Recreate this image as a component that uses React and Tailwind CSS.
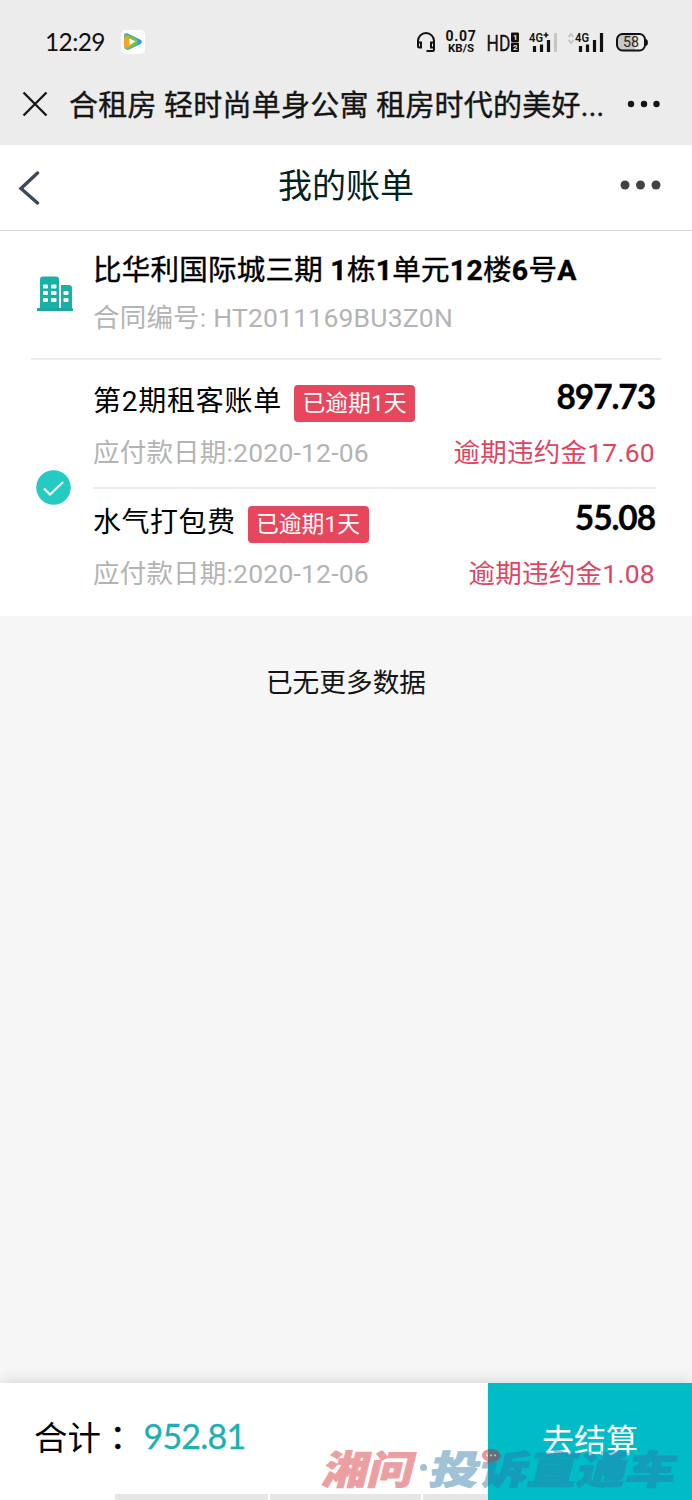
import React from 'react';

const lato = "font-['Lato','Noto_Sans_CJK_SC',sans-serif]";
const svgFont = { fontFamily: "'Roboto', sans-serif" };

function Headphones() {
  return (
    <svg className="block h-[22px] w-5 shrink-0" viewBox="0 0 20 22" fill="none" stroke="#111" strokeWidth="2">
      <path d="M2 13V10a8 8 0 0 1 16 0v3" />
      <path d="M2 11.500h3v5H3.500A1.500 1.500 0 0 1 2 15z" />
      <path d="M18 11.500h-3v5h3zM18 15v3.500a1.500 1.500 0 0 1-1.500 1.500H10.500" />
    </svg>
  );
}

function StatusIcons() {
  return (
    <div className="flex h-[26px] items-center text-[#111]">
      <Headphones />
      <div className="ml-2 flex w-[34px] flex-col items-center font-['Roboto',sans-serif] font-bold">
        <span className="text-[14px] leading-[13px] tracking-[0.7px]">0.07</span>
        <span className="text-[11.500px] leading-[11px]">KB/S</span>
      </div>
      <svg className="ml-2 block h-[26px] w-[34px]" viewBox="0 0 34 26" style={svgFont}>
        <text transform="translate(0.5 21.5) scale(0.79 1)" fontSize="22" fill="#111" stroke="#111" strokeWidth="0.300">HD</text>
        <rect x="25" y="3.500" width="8" height="9.500" rx="1" fill="#111" />
        <rect x="25" y="13.500" width="8" height="9.500" rx="1" fill="#111" />
        <text x="27" y="11" fontSize="8" fontWeight="700" fill="#ececec">1</text>
        <text x="27" y="21.300" fontSize="8" fontWeight="700" fill="#ececec">2</text>
      </svg>
      <svg className="ml-2 block h-[26px] w-[32px]" viewBox="0 0 32 26" style={svgFont}>
        <text x="1" y="13" fontSize="13.500" fontWeight="600" textLength="14" lengthAdjust="spacingAndGlyphs" fill="#111">4G</text>
        <path d="M15.500 6h5M18 3.500v5" stroke="#111" strokeWidth="1.600" />
        <path d="M6.500 17v6M13.500 15.500V23M20.500 11V23" stroke="#111" strokeWidth="3.200" />
        <path d="M27.500 4v19" stroke="#c6c6c6" strokeWidth="3" />
      </svg>
      <svg className="ml-[7px] block h-[26px] w-[38px]" viewBox="0 0 38 26" style={svgFont}>
        <path d="M1.500 8l2.500-3 2.500 3M1.500 11l2.500 3 2.500-3" stroke="#c2c2c2" strokeWidth="1.800" fill="none" />
        <text x="8" y="13" fontSize="13.500" fontWeight="600" textLength="14" lengthAdjust="spacingAndGlyphs" fill="#111">4G</text>
        <path d="M13.500 17v6M20.500 15.500V23M27.500 11V23M34.500 4v19" stroke="#111" strokeWidth="3.200" />
      </svg>
      <svg className="ml-[10px] block h-[26px] w-[34px]" viewBox="0 0 34 26" style={svgFont}>
        <path d="M7.500 5H20v17H7.500A5.500 5.500 0 0 1 2 16.500v-6A5.500 5.500 0 0 1 7.500 5z" fill="#c8c8c8" />
        <rect x="2" y="5" width="28" height="16.500" rx="5.500" fill="none" stroke="#111" strokeWidth="2" />
        <path d="M31 10.500c2 .5 2 5.500 0 6z" fill="#111" stroke="#111" />
        <text x="8" y="18.200" fontSize="14.500" textLength="16" lengthAdjust="spacingAndGlyphs" fill="#222">58</text>
      </svg>
    </div>
  );
}

function VideoIcon() {
  return (
    <svg className="block h-[24px] w-[24px]" viewBox="0 0 24 24">
      <rect width="24" height="24" rx="5" fill="#fff" />
      <path d="M3 5.500Q3 2.500 6.500 3.500L19 9.500Q22.500 11.500 19.500 14L8 19.500Q4 20.500 3.500 17Z" fill="#3298dc" />
      <path d="M3 7Q3 3.500 6.500 4.500L15 8.500Q19 11.500 15.500 14.500L7 19.500Q3.500 19.500 3 15Z" fill="#7dc142" />
      <path d="M3 8Q4 5.500 7 7L14 11.500 6 18Q3 17.500 3 14Z" fill="#f3a72b" />
      <path d="M8.500 8.500 14.500 11.500 8.500 15Z" fill="#fff" />
    </svg>
  );
}

function Building() {
  return (
    <svg className="block h-9 w-9" viewBox="0 0 36 36">
      <path d="M3 33V3.500A3 3 0 0 1 6 .500h13a3 3 0 0 1 3 3V33zM24 33V9h8a3 3 0 0 1 3 3v21z" fill="#19b0a5" />
      <path d="M1 32h34q1 0 1 1v2H0v-2q0-1 1-1z" fill="#19a89e" />
      <g fill="#fff">
        <rect x="6" y="8.500" width="5" height="4" rx="1" />
        <rect x="14" y="8.500" width="5.500" height="4" rx="1" />
        <rect x="6" y="15" width="5" height="4" rx="1" />
        <rect x="14" y="15" width="5.500" height="4" rx="1" />
        <rect x="6" y="22" width="5" height="4" rx="1" />
        <rect x="14" y="22" width="5.500" height="4" rx="1" />
        <rect x="26.500" y="15" width="5" height="4" rx="1" />
        <rect x="26.500" y="22" width="5" height="4" rx="1" />
      </g>
    </svg>
  );
}

function Bill({ name, nameSpacing, amount, penalty }) {
  return (
    <div className="flex justify-between pr-px">
      <div>
        <div className="flex h-[42px] items-start">
          <span className={`${nameSpacing} pt-[2px] text-[28px] leading-[36px] text-black font-['Roboto','Noto_Sans_CJK_SC',sans-serif]`}>{name}</span>
          <span className="ml-3 mt-[3px] h-[37px] w-[121px] rounded-[4px] bg-[#e8465c] text-center text-[22.800px] leading-[38px] text-white font-['Roboto','Noto_Sans_CJK_SC',sans-serif]">
            已逾期1天
          </span>
        </div>
        <div className="mt-[11px] text-[26.500px] leading-9 tracking-[0.200px] text-[#b4b4b4] font-['Roboto','Noto_Sans_CJK_SC',sans-serif]">应付款日期:2020-12-06</div>
      </div>
      <div className="text-right">
        <div className="h-[42px] text-[33.500px] leading-[28px] font-bold tracking-[-1.100px] text-black [-webkit-text-stroke:0.300px_#000] font-['Lato',sans-serif]">{amount}</div>
        <div className="mt-[11px] text-[26.500px] leading-9 tracking-[0.250px] text-[#de4560] font-['Roboto','Noto_Sans_CJK_SC',sans-serif]">逾期违约金{penalty}</div>
      </div>
    </div>
  );
}

function Watermark() {
  return (
    <div className="absolute bottom-[13px] left-[325px] flex h-[40px] w-[360px] items-center whitespace-nowrap text-[39px] font-black leading-10 opacity-45 font-['Noto_Sans_CJK_SC',sans-serif]">
      <div className="w-[95px]">
        <span className="inline-block origin-left text-[#d72c33] [-webkit-text-stroke:1px_#d72c33] [transform:skewX(-14deg)_scaleX(1.160)]">湘问</span>
      </div>
      <span className="mr-[5px] h-[7px] w-[7px] rounded-full bg-[#2c79a8]" />
      <div className="w-[250px]">
        <span className="inline-block origin-left text-[#2c79a8] [-webkit-text-stroke:1px_#2c79a8] [transform:skewX(-14deg)_scaleX(1.260)]">投诉直通车</span>
      </div>
      <svg className="absolute left-[156px] top-[1px] h-[18px] w-[20px]" viewBox="0 0 20 18">
        <path d="M10 1c5 0 9 2.500 9 6.500S15 14 11 14l-6 3 1-4C3 12 1 10 1 7.500 1 3.500 5 1 10 1z" fill="#e3101a" />
        <path d="M6 6.500v1.800M10 6.500v1.800M14 6.500v1.800" stroke="#fff" strokeWidth="2" />
      </svg>
    </div>
  );
}

export default function App() {
  return (
    <div className="relative flex h-[1500px] w-[692px] flex-col overflow-hidden whitespace-nowrap bg-[#f6f6f6]">
      <header className="h-[145px] bg-[#ececec]">
        <div className="flex h-[84px] items-center justify-between pl-[45px] pr-[43px]">
          <div className="flex items-center gap-4">
            <span className={`${lato} w-[60px] text-[24.500px] leading-7 tracking-[-0.600px] text-[#111]`}>12:29</span>
            <VideoIcon />
          </div>
          <StatusIcons />
        </div>
        <div className="flex h-[40px] items-center pl-[22px]">
          <svg className="h-[26px] w-[26px]" viewBox="0 0 26 26">
            <path d="M1.500 1.500l23 23M24.500 1.500l-23 23" stroke="#151515" strokeWidth="2.300" />
          </svg>
          <div className="ml-[21px] w-[537px] pt-[3px] text-[29px] leading-10 tracking-[0.230px] text-[#151515] [-webkit-text-stroke:0.400px_#151515] font-['Roboto','Noto_Sans_CJK_SC',sans-serif]">
            合租房 轻时尚单身公寓 租房时代的美好...
          </div>
          <svg className="ml-[21px] h-2 w-[34px]" viewBox="0 0 34 8" fill="#151515">
            <circle cx="4" cy="4" r="3.200" />
            <circle cx="17" cy="4" r="3.200" />
            <circle cx="29.500" cy="4" r="3.200" />
          </svg>
        </div>
      </header>

      <nav className="flex h-[86px] items-center justify-between border-b border-[#d9d9d9] bg-white pl-[18px] pr-[30px]">
        <svg className="h-[34px] w-[22px]" viewBox="0 0 22 34" fill="none">
          <path d="M19.500 2L3 17.500 19.500 32" stroke="#3d4957" strokeWidth="3.400" strokeLinecap="round" />
        </svg>
        <h1 className="ml-[32px] -mt-[7px] text-[34px] leading-[48px] text-[#05211f] font-['Noto_Sans_CJK_SC',sans-serif]">我的账单</h1>
        <svg className="-mt-[6px] h-3 w-[42px]" viewBox="0 0 42 12" fill="#434343">
          <circle cx="5" cy="6" r="4.500" />
          <circle cx="20.500" cy="6" r="4.500" />
          <circle cx="36" cy="6" r="4.500" />
        </svg>
      </nav>

      <main className="h-[385px] bg-white">
        <section className="mx-[31px] flex h-[129px] border-b-2 border-[#ececec] pl-[6px] pt-[20px]">
          <div className="w-[56px] pt-[25px]">
            <Building />
          </div>
          <div>
            <div className="text-[28.500px] leading-10 tracking-[0.250px] text-black [-webkit-text-stroke:0.400px_#000] font-['Roboto','Noto_Sans_CJK_SC',sans-serif]">
              比华利国际城三期 <b>1</b>栋<b>1</b>单元<b>12</b>楼<b>6</b>号<b>A</b>
            </div>
            <div className="mt-[9px] text-[26.500px] leading-9 tracking-[0.200px] text-[#b4b4b4] font-['Roboto','Noto_Sans_CJK_SC',sans-serif]">合同编号: HT2011169BU3Z0N</div>
          </div>
        </section>
        <section className="flex pl-[36px] pr-[36px]">
          <div className="flex w-[57px] items-center pb-[2px]">
            <svg className="h-[35px] w-[35px]" viewBox="0 0 35 35" fill="none">
              <circle cx="17.500" cy="17.500" r="17.300" fill="#25cbc3" />
              <path d="M8 18.500l6 6L27 12" stroke="#fff" strokeWidth="2.200" />
            </svg>
          </div>
          <div className="flex-1">
            <div className="h-[129px] border-b-2 border-[#ececec] pt-[22px]">
              <Bill name="第2期租客账单" nameSpacing="tracking-[0.750px]" amount="897.73" penalty="17.60" />
            </div>
            <div className="h-[127px] pt-[14px]">
              <Bill name="水气打包费" nameSpacing="tracking-[0.500px]" amount="55.08" penalty="1.08" />
            </div>
          </div>
        </section>
      </main>

      <p className="mt-[45px] text-center text-[26.700px] leading-10 text-[#151515] font-['Noto_Sans_CJK_SC',sans-serif]">已无更多数据</p>

      <footer className="relative mt-auto flex h-[117px] bg-white shadow-[0_-2px_14px_rgba(0,0,0,0.13)]">
        <div className="flex flex-1 flex-col">
          <div className="flex h-[105px] items-center pl-[34px]">
            <span className="text-[33.500px] leading-[48px] text-black font-['Noto_Sans_CJK_SC',sans-serif]">
              合计<span className="font-['Noto_Sans_CJK_TC',sans-serif] [-webkit-text-stroke:0.400px_#000]">：</span>
            </span>
            <span className={`${lato} ml-[9px] text-[34px] leading-[48px] tracking-[-0.800px] text-[#1db0b2] [-webkit-text-stroke:0.300px_#1db0b2]`}>952.81</span>
          </div>
          <div className="ml-[115px] mt-auto flex h-[6px] gap-[2px]">
            <div className="w-[153px] bg-[#e6e6e6]" />
            <div className="w-[151px] bg-[#e6e6e6]" />
            <div className="flex-1 bg-[#e6e6e6]" />
          </div>
        </div>
        <button className="h-full w-[204px] bg-[#00bcc6] pb-[8px] text-[32px] text-white font-['Noto_Sans_CJK_SC',sans-serif]">去结算</button>
        <Watermark />
      </footer>
    </div>
  );
}
